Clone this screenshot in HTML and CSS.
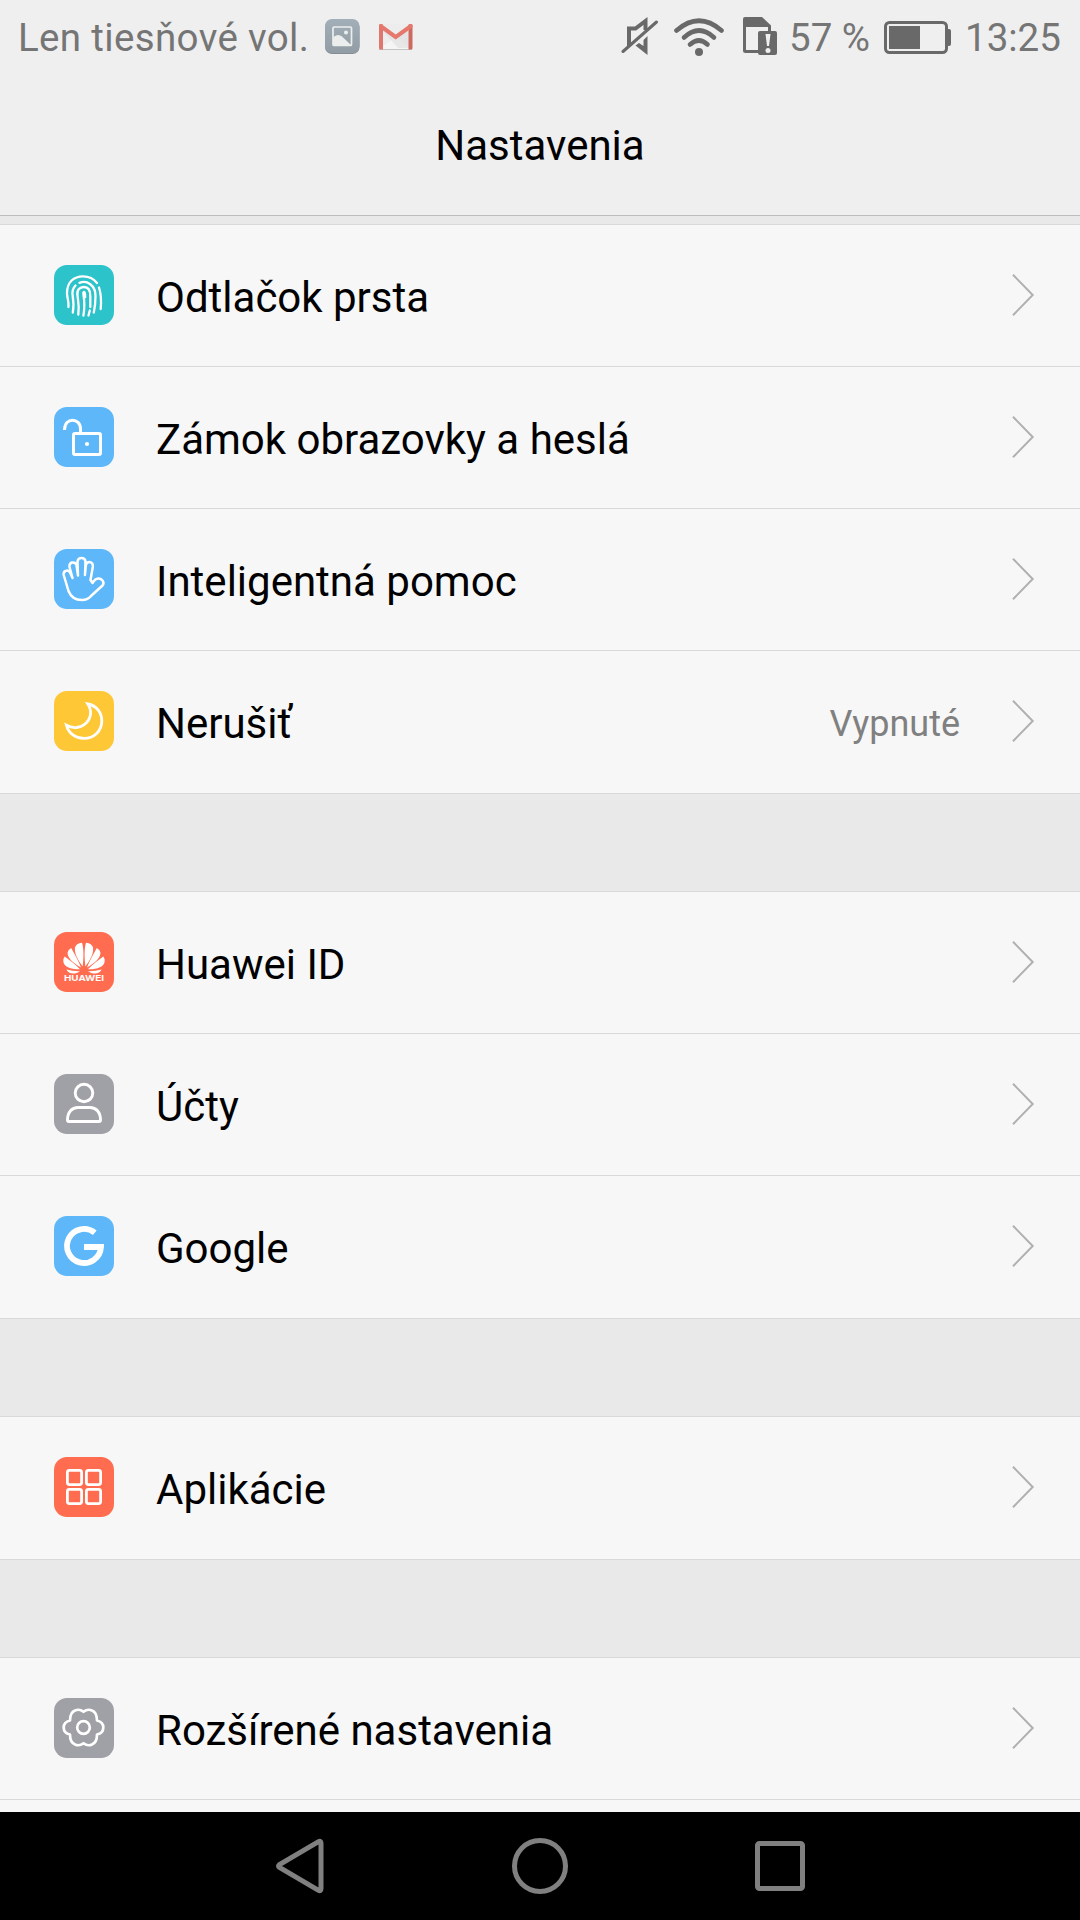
FILE: index.html
```html
<!DOCTYPE html>
<html lang="sk">
<head>
<meta charset="utf-8">
<title>Nastavenia</title>
<link rel="stylesheet" href="styles.css">
</head>
<body>
<div class="screen">
  <header class="header">
    <div class="status">
      <span class="carrier">Len tiesňové vol.</span>
      <svg class="ic-photo" width="36" height="36" viewBox="0 0 36 36"><defs><linearGradient id="pg" x1="0" y1="0" x2="0" y2="1"><stop offset="0" stop-color="#a3afb8"/><stop offset="1" stop-color="#919ca4"/></linearGradient></defs><rect x="0" y="1" width="34.5" height="34" rx="7" fill="#858e95"/><rect x="0" y="0" width="34.5" height="34" rx="7" fill="url(#pg)"/><rect x="8" y="8" width="18.500" height="18.500" rx="1" fill="none" stroke="#eceeee" stroke-width="1.700"/><path d="M8 18.500C11 15.500 14 15 17 17.500L26.500 26.500H8Z" fill="#eceeee"/><circle cx="21" cy="13.500" r="2" fill="#eceeee"/></svg>
      <svg class="ic-mail" width="36" height="28" viewBox="0 0 36 28"><rect x="1" y="1" width="33" height="25.500" rx="1.500" fill="#ededed"/><path d="M1 26L17.500 14L34 26Z" fill="#f5f5f5"/><path d="M5 5L17.500 14L30 5L31 25H20L5 8Z" fill="#dedede" opacity=".65"/><path d="M1 26.500H34" stroke="#c4c4c4"/><path d="M1 2.500Q1 1 2.500 1L5 1.500V26.500H2.500Q1 26.500 1 25Z" fill="#e0776d"/><path d="M34.500 2.500Q34.500 1 33 1L30.500 1.500V26.500H33Q34.500 26.500 34.500 25Z" fill="#cd695f"/><path d="M1 2.500Q1 .5 4 1.500L17.700 11.500L31.500 1.500Q34.500 .5 34.500 2.500V4.500L17.700 16.500L1 4.500Z" fill="#e5776c"/></svg>
      <span class="spacer"></span>
      <svg class="ic-mute" width="38" height="40" viewBox="0 0 38 40"><path d="M8 29V11.500H14.500L24.500 4V13" fill="none" stroke="#696969" stroke-width="4"/><path d="M26.500 19V38L14.500 28.500L18 26L22.500 29V23Z" fill="#696969"/><path d="M2 34.500L35.500 5" stroke="#696969" stroke-width="3" stroke-linecap="round"/></svg>
      <svg class="ic-wifi" width="50" height="38" viewBox="0 0 50 38"><g fill="none" stroke="#696969" stroke-width="4.600" stroke-linecap="round"><path d="M2.500 12.500Q25-7 47.500 12.500"/><path d="M10 19.500Q25 5.500 40 19.500"/><path d="M16 26.500Q25 18.500 33.500 26.500"/></g><circle cx="25" cy="34" r="4" fill="#696969"/></svg>
      <svg class="ic-sim" width="35" height="39" viewBox="0 0 35 39"><path d="M1.500 9V33.500Q1.500 34.500 2.500 34.500H18M26.500 16V9" fill="none" stroke="#696969" stroke-width="3"/><path d="M0 10V2Q0 0 2 0H19L28 8.500V10Z" fill="#696969"/><rect x="15" y="14" width="19" height="24" rx="2" fill="#696969"/><path d="M22.500 17H27.500L26 29H24Z" fill="#efefef"/><circle cx="25" cy="33.500" r="2.500" fill="#efefef"/></svg>
      <span class="percent">57 %</span>
      <svg class="ic-battery" width="67" height="34" viewBox="0 0 67 34"><rect x="1.500" y="1.500" width="61" height="30" rx="4" fill="none" stroke="#696969" stroke-width="3"/><rect x="5" y="5" width="31" height="23" fill="#696969"/><path d="M63 8H65Q67 8 67 10V23Q67 25 65 25H63Z" fill="#696969"/></svg>
      <span class="clock">13:25</span>
    </div>
    <h1 class="title">Nastavenia</h1>
  </header>

  <main class="list">
    <section class="group">
      <div class="row">
        <svg class="icon" viewBox="0 0 60 60"><rect width="60" height="60" rx="13" fill="#2dc3cb"/><g fill="none" stroke="#fff" stroke-width="2.300" stroke-linecap="round"><path d="M14.500 42C15 36 13 33 13 28C13 17 20 11.300 29 11.300C35 11.300 40 14 43 18"/><path d="M25.500 17.800C33 15 41.500 20 41.500 31C41.500 37 41 42 39.800 47.500"/><path d="M21.500 20.500C18.500 23.500 18 27 18.700 31C19.500 36 20 41 18.800 47.500"/><path d="M24.300 49.500C25.500 41 24.300 37 23.500 31C22.500 25 25.500 22 30 22C34 22 36.300 25 36.300 31V42"/><path d="M35.800 45.500L34.500 50.500"/><path d="M29.400 50.500C30.800 43 30.500 36 29.400 29Q29 27 30.300 27Q31 27 31.200 32"/><path d="M45 22.500C46.500 27 47.500 35 46.700 44"/></g></svg>
        <span class="label">Odtlačok prsta</span>
        <svg class="chevron" viewBox="0 0 24 44"><path d="M2 1.800L21.700 22L2 42.200"/></svg>
      </div>
      <div class="row">
        <svg class="icon" viewBox="0 0 60 60"><rect width="60" height="60" rx="13" fill="#5db7f8"/><g fill="none" stroke="#fff" stroke-width="3"><rect x="19.500" y="26.500" width="27" height="21" rx="1.500"/><path d="M10.500 23C10.500 9.500 26.500 10.500 26.500 22V26"/></g><circle cx="33" cy="37" r="2.100" fill="#fff"/></svg>
        <span class="label">Zámok obrazovky a heslá</span>
        <svg class="chevron" viewBox="0 0 24 44"><path d="M2 1.800L21.700 22L2 42.200"/></svg>
      </div>
      <div class="row">
        <svg class="icon" viewBox="0 0 60 60"><rect width="60" height="60" rx="13" fill="#5db7f8"/><path d="M18.500 29L16.300 24Q14.500 20.500 11.500 22Q9.200 23 9.700 26L14.500 42Q18 51 28 51Q34 51 37.500 46.500L48.500 36.500Q50.500 34 48.500 31.500C46 28.500 42 29 39.500 32.500L38.500 34L36.500 31L38.800 18Q39.300 13.500 35.500 13Q32.500 13 31.800 16.500L31 26L31.500 12.500Q31 9 27.500 9Q24 9 23.500 12.500L24 26.500L22.500 16Q21.500 13 18 13.500Q15 14.500 15.500 18L18.500 29" fill="none" stroke="#fff" stroke-width="2.500" stroke-linejoin="round" stroke-linecap="round"/></svg>
        <span class="label">Inteligentná pomoc</span>
        <svg class="chevron" viewBox="0 0 24 44"><path d="M2 1.800L21.700 22L2 42.200"/></svg>
      </div>
      <div class="row">
        <svg class="icon" viewBox="0 0 60 60"><rect width="60" height="60" rx="13" fill="#fec736"/><path d="M33.800 13C43 14.500 47.800 22 47.800 30C47.800 40 40 47.300 30 47.300C21 47.300 14.500 42 12.500 34.300C18 37.500 26 37.500 31 33C37 28 38.500 20 33.800 13Z" fill="none" stroke="#fff" stroke-width="2.800"/></svg>
        <span class="label">Nerušiť</span>
        <span class="value">Vypnuté</span>
        <svg class="chevron" viewBox="0 0 24 44"><path d="M2 1.800L21.700 22L2 42.200"/></svg>
      </div>
    </section>

    <section class="group">
      <div class="row">
        <svg class="icon" viewBox="0 0 60 60"><rect width="60" height="60" rx="13" fill="#ff6c50"/><g id="petals" fill="#fff"><path d="M28.600 34.500C24 28 20 21.500 21 15.500Q22 11.500 28 10.800C30 17 29.600 27 28.600 34.500Z"/><path d="M27 35.500C20 31.500 13.200 26.500 13.600 20.500Q14 17.500 17.200 16C20.500 22 24.500 29 27 35.500Z"/><path d="M26 37.300C17.500 37.600 9.500 35 9.300 29Q9.200 26.500 10.700 24.500C16 28.500 21.500 32.500 26 37.300Z"/><path d="M26 39C22.500 41.500 18 42 15 40.300Q13 38.800 12.300 37.300Q19 39.200 26 39Z" transform="translate(0 .2)"/></g><use href="#petals" transform="matrix(-1 0 0 1 60 0)"/><text class="brand" x="10" y="48.800" textLength="40" lengthAdjust="spacingAndGlyphs">HUAWEI</text></svg>
        <span class="label">Huawei ID</span>
        <svg class="chevron" viewBox="0 0 24 44"><path d="M2 1.800L21.700 22L2 42.200"/></svg>
      </div>
      <div class="row">
        <svg class="icon" viewBox="0 0 60 60"><rect width="60" height="60" rx="13" fill="#a0a1a6"/><g fill="none" stroke="#fff" stroke-width="2.900"><ellipse cx="30" cy="19" rx="8.800" ry="8.700"/><path d="M15 47.500Q13.500 47.500 13.500 46C13.500 38 18 33.500 24 33.500H36C42 33.500 46.500 38 46.500 46Q46.500 47.500 45 47.500Z"/></g></svg>
        <span class="label">Účty</span>
        <svg class="chevron" viewBox="0 0 24 44"><path d="M2 1.800L21.700 22L2 42.200"/></svg>
      </div>
      <div class="row">
        <svg class="icon" viewBox="0 0 60 60"><rect width="60" height="60" rx="13" fill="#5db7f8"/><path d="M40.800 16.800A17 17 0 1 0 47 31H30" fill="none" stroke="#fff" stroke-width="5.800"/></svg>
        <span class="label">Google</span>
        <svg class="chevron" viewBox="0 0 24 44"><path d="M2 1.800L21.700 22L2 42.200"/></svg>
      </div>
    </section>

    <section class="group">
      <div class="row">
        <svg class="icon" viewBox="0 0 60 60"><rect width="60" height="60" rx="13" fill="#ff6c50"/><g fill="none" stroke="#fff" stroke-width="2.800"><rect x="13.400" y="13.400" width="14.200" height="14.200" rx="2"/><rect x="32.400" y="13.400" width="14.200" height="14.200" rx="2"/><rect x="13.400" y="32.400" width="14.200" height="14.200" rx="2"/><rect x="32.400" y="32.400" width="14.200" height="14.200" rx="2"/></g></svg>
        <span class="label">Aplikácie</span>
        <svg class="chevron" viewBox="0 0 24 44"><path d="M2 1.800L21.700 22L2 42.200"/></svg>
      </div>
    </section>

    <section class="group">
      <div class="row">
        <svg class="icon" viewBox="0 0 60 60"><rect width="60" height="60" rx="13" fill="#a0a1a6"/><g fill="none" stroke="#fff" stroke-width="2.700" stroke-linejoin="round"><path d="M29.500 13.800Q33.500 10.500 38 12.500Q43 14.500 43 22.500C47.500 23.500 49.300 26 49.300 29.500C49.300 33 47.500 35.500 43 36.500Q43 44.500 38 46.500Q33.500 48.500 29.500 45.200Q25.500 48.500 21 46.500Q16 44.500 16 36.500C11.500 35.500 9.700 33 9.700 29.500C9.700 26 11.500 23.500 16 22.500Q16 14.500 21 12.500Q25.500 10.500 29.500 13.800Z"/><circle cx="29.500" cy="29.500" r="6.300"/></g></svg>
        <span class="label">Rozšírené nastavenia</span>
        <svg class="chevron" viewBox="0 0 24 44"><path d="M2 1.800L21.700 22L2 42.200"/></svg>
      </div>
      <div class="row row-next"></div>
    </section>
  </main>

  <nav class="nav">
    <svg class="nav-icon" viewBox="0 0 60 60"><path d="M9.500 28.500Q7.500 30 9.500 31.500L48.500 54.300Q51 55.500 51 52.500V7.500Q51 4.500 48.500 5.700Z"/></svg>
    <svg class="nav-icon" viewBox="0 0 60 60"><circle cx="30" cy="30" r="25.500"/></svg>
    <svg class="nav-icon" viewBox="0 0 60 60"><rect x="7.500" y="7.500" width="45" height="45" rx="2"/></svg>
  </nav>
</div>
</body>
</html>
```
FILE: styles.css
```css
* { box-sizing: border-box; }

body {
  margin: 0;
  font-family: Roboto, "Liberation Sans", sans-serif;
  background: #e9e9e9;
}

svg { display: block; flex: none; }

.screen {
  width: 1080px;
  height: 1920px;
  display: flex;
  flex-direction: column;
  overflow: hidden;
}

.header {
  height: 216px;
  flex: none;
  background: #efefef;
  border-bottom: 1px solid #bdbdbd;
}

.status {
  height: 73px;
  display: flex;
  align-items: center;
  padding: 0 18px;
  color: #757575;
  font-size: 38.5px;
  line-height: 73px;
  white-space: nowrap;
}

.status span { padding-top: 2px; }
.carrier { width: 289px; letter-spacing: 0.35px; }
.ic-photo { margin-left: 18px; }
.ic-mail { margin-left: 17px; }
.spacer { flex: 1; }
.ic-wifi { margin-left: 15px; }
.ic-sim { margin-left: 19px; }
.percent { margin-left: 11px; width: 83px; }
.ic-battery { margin-left: 12px; margin-top: 2px; }
.clock { margin-left: 14px; width: 97px; }

.title {
  margin: 0;
  font-size: 42px;
  font-weight: 400;
  line-height: 146px;
  text-align: center;
  color: #000;
}

.list {
  flex: 1;
  min-height: 0;
  overflow: hidden;
  padding-top: 8px;
  display: flex;
  flex-direction: column;
  gap: 97px;
}

.group {
  flex: none;
  background: #f7f7f7;
  padding-bottom: 1px;
  border-bottom: 1px solid #d9d9d9;
}

.row {
  height: 142px;
  display: flex;
  align-items: center;
  padding: 0 45px 1px 54px;
  border-top: 1px solid #d9d9d9;
}

.icon { width: 60px; height: 60px; }

.label {
  margin-left: 42px;
  font-size: 42px;
  line-height: 60px;
  padding-top: 5px;
  color: #000;
}

.value {
  margin-left: auto;
  margin-right: 51px;
  padding-top: 5px;
  font-size: 36px;
  color: #808080;
}

.chevron { width: 24px; height: 44px; margin-left: auto; }
.value + .chevron { margin-left: 0; }
.chevron path { fill: none; stroke: #b0b0b0; stroke-width: 2; }

.brand { font: 700 8px Inter, Roboto, sans-serif; fill: #fff; }

.nav {
  height: 108px;
  flex: none;
  background: #000;
  display: flex;
  justify-content: center;
  align-items: center;
  gap: 180px;
}

.nav-icon { width: 60px; height: 60px; }
.nav-icon path, .nav-icon circle, .nav-icon rect { fill: none; stroke: #808080; stroke-width: 5; }
```
